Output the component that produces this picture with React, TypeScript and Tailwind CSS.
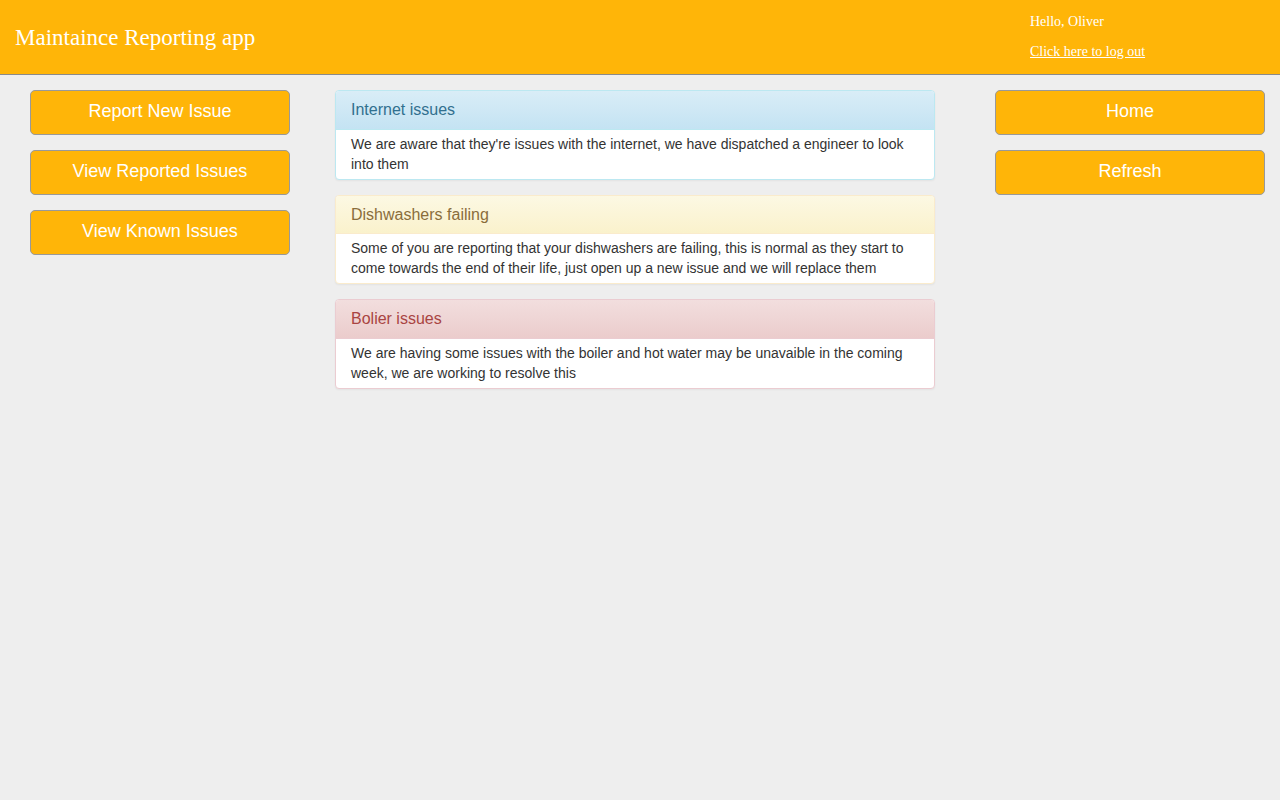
const panels = [
  {
    title: "Internet issues",
    body: "We are aware that they're issues with the internet, we have dispatched a engineer to look into them",
    wrap: "border-[#bce8f1]",
    head: "bg-gradient-to-b from-[#d9edf7] to-[#c4e3f3] text-[#31708f] border-[#bce8f1]",
  },
  {
    title: "Dishwashers failing",
    body: "Some of you are reporting that your dishwashers are failing, this is normal as they start to come towards the end of their life, just open up a new issue and we will replace them",
    wrap: "border-[#faebcc]",
    head: "bg-gradient-to-b from-[#fcf8e3] to-[#faf2cc] text-[#8a6d3b] border-[#faebcc]",
  },
  {
    title: "Bolier issues",
    body: "We are having some issues with the boiler and hot water may be unavaible in the coming week, we are working to resolve this",
    wrap: "border-[#ebccd1]",
    head: "bg-gradient-to-b from-[#f2dede] to-[#ebcccc] text-[#a94442] border-[#ebccd1]",
  },
];

const NavButton = ({ label }: { label: string }) => (
  <button className="h-[45px] w-full rounded-[5px] border border-[#999] bg-[#ffb508] pb-[2px] text-[18px] text-white">
    {label}
  </button>
);

export default function App() {
  return (
    <div className="min-h-[800px] bg-[#eeeeee] font-['Liberation_Sans',Arial,sans-serif]">
      {/* Header */}
      <div className="flex h-[75px] justify-between border-b border-[#8a8a8a] bg-[#ffb508] font-['Liberation_Serif','Times_New_Roman',serif] text-white">
        <h1 className="pl-[15px] pt-[23px] text-[23px] leading-[30px]">Maintaince Reporting app</h1>
        <div className="w-[250px] pt-[12px] text-[14px] leading-[20px]">
          <div>Hello, Oliver</div>
          <a className="mt-[10px] block underline" href="#">
            Click here to log out
          </a>
        </div>
      </div>

      {/* Main */}
      <div className="flex pt-[15px]">
        <div className="ml-[30px] flex w-[260px] flex-col gap-[15px]">
          <NavButton label="Report New Issue" />
          <NavButton label="View Reported Issues" />
          <NavButton label="View Known Issues" />
        </div>

        <div className="ml-[45px] flex w-[600px] flex-col gap-[15px]">
          {panels.map((p) => (
            <div
              key={p.title}
              className={`overflow-hidden rounded-[4px] border bg-white shadow-[0_1px_2px_rgba(0,0,0,0.05)] ${p.wrap}`}
            >
              <div className={`border-b px-[15px] py-[10px] text-[16px] leading-[17.6px] ${p.head}`}>
                {p.title}
              </div>
              <div className="px-[15px] pt-[4px] pb-[5px] text-[14px] leading-[20px] text-[#333]">{p.body}</div>
            </div>
          ))}
        </div>

        <div className="ml-[60px] flex w-[270px] flex-col gap-[15px]">
          <NavButton label="Home" />
          <NavButton label="Refresh" />
        </div>
      </div>
    </div>
  );
}
